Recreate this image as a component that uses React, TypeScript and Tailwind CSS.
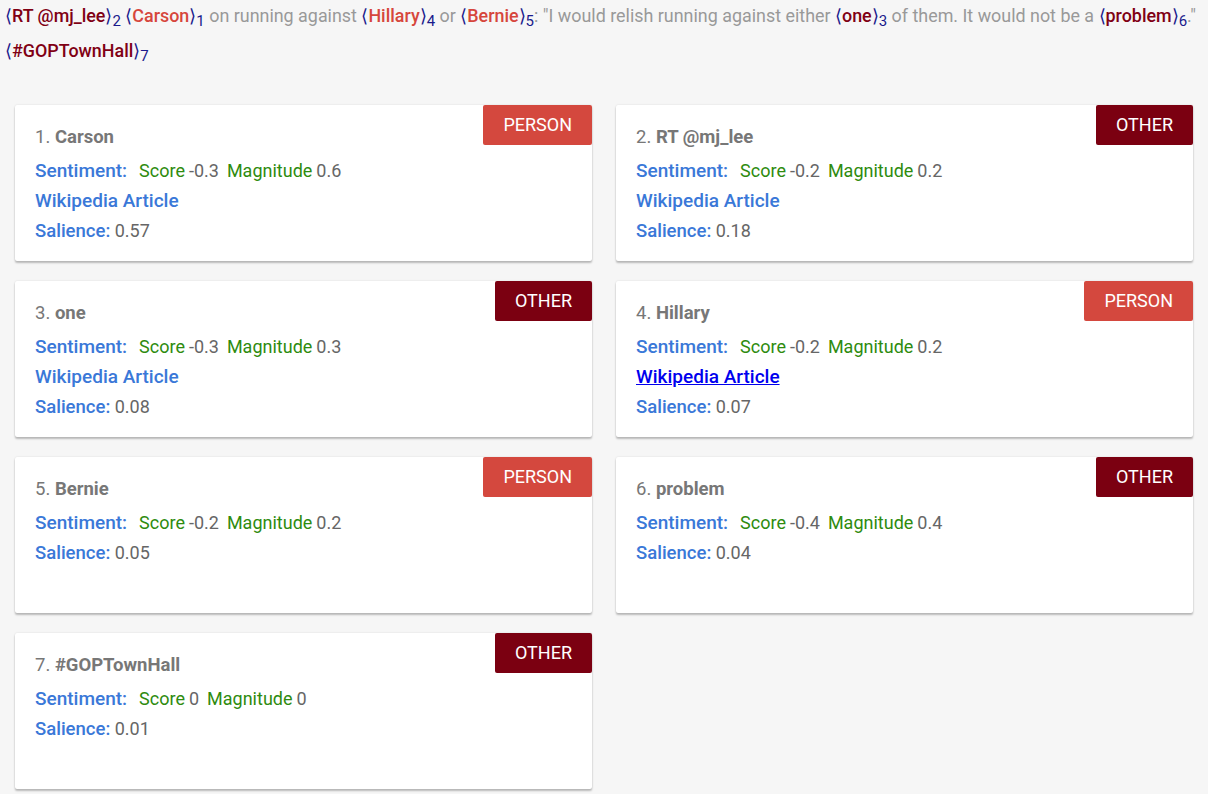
import React from 'react';

type Entity = {
  n: number;
  name: string;
  type: 'PERSON' | 'OTHER';
  score: string;
  magnitude: string;
  wiki: boolean;
  visited?: boolean;
  salience: string;
};

const entities: Entity[] = [
  { n: 1, name: 'Carson', type: 'PERSON', score: '-0.3', magnitude: '0.6', wiki: true, salience: '0.57' },
  { n: 2, name: 'RT @mj_lee', type: 'OTHER', score: '-0.2', magnitude: '0.2', wiki: true, salience: '0.18' },
  { n: 3, name: 'one', type: 'OTHER', score: '-0.3', magnitude: '0.3', wiki: true, salience: '0.08' },
  { n: 4, name: 'Hillary', type: 'PERSON', score: '-0.2', magnitude: '0.2', wiki: true, visited: true, salience: '0.07' },
  { n: 5, name: 'Bernie', type: 'PERSON', score: '-0.2', magnitude: '0.2', wiki: false, salience: '0.05' },
  { n: 6, name: 'problem', type: 'OTHER', score: '-0.4', magnitude: '0.4', wiki: false, salience: '0.04' },
  { n: 7, name: '#GOPTownHall', type: 'OTHER', score: '0', magnitude: '0', wiki: false, salience: '0.01' },
];

const Mention: React.FC<{ text: string; n: number; person?: boolean }> = ({ text, n, person }) => (
  <span className="font-medium">
    <span className="text-[#1a1a8c] font-normal">⟨</span>
    <span className={person ? 'text-[#d6463c]' : 'text-[#800014]'}>{text}</span>
    <span className="text-[#1a1a8c] font-normal">⟩</span>
    <sub className="text-[#1a1a8c] text-[15px] font-normal">{n}</sub>
  </span>
);

const Card: React.FC<{ e: Entity }> = ({ e }) => (
  <div className="relative h-[156px] bg-white rounded-[2px] px-5 pt-[17px] shadow-[0_2px_2px_rgba(0,0,0,0.24),0_0_2px_rgba(0,0,0,0.12)] leading-[30px] text-[18px]">
    <div
      className={
        'absolute top-0 right-0 h-10 flex items-center px-5 rounded-[2px] text-white text-[18px] ' +
        (e.type === 'PERSON' ? 'bg-[#d4483e]' : 'bg-[#7b0011]')
      }
    >
      {e.type}
    </div>
    <div className="text-[#777] text-[18.5px]">
      {e.n}. <span className="font-bold">{e.name}</span>
    </div>
    <div className="mt-1 flex items-baseline">
      <span className="text-[#3a78d8] font-medium text-[19px] mr-3">Sentiment:</span>
      <span className="text-[#2e8b0e]">Score</span>
      <span className="text-[#666] ml-1 mr-2">{e.score}</span>
      <span className="text-[#2e8b0e]">Magnitude</span>
      <span className="text-[#666] ml-1">{e.magnitude}</span>
    </div>
    {e.wiki && (
      <div>
        <a
          href="#"
          className={
            e.visited
              ? 'text-[#0000ee] font-medium text-[19px] underline'
              : 'text-[#3a78d8] font-medium text-[19px]'
          }
        >
          Wikipedia Article
        </a>
      </div>
    )}
    <div>
      <span className="text-[#3a78d8] font-medium text-[18.5px]">Salience:</span>
      <span className="text-[#666]"> {e.salience}</span>
    </div>
  </div>
);

export default function App() {
  return (
    <div className="min-h-screen bg-[#f6f6f6] font-['Roboto',sans-serif] px-[15px] pb-4">
      <p className="text-[17.9px] leading-[35px] text-[#999] -mx-[10px] -mt-[2px]">
        <Mention text="RT @mj_lee" n={2} /> <Mention text="Carson" n={1} person /> on running against{' '}
        <Mention text="Hillary" n={4} person /> or <Mention text="Bernie" n={5} person />: "I would relish running
        against either <Mention text="one" n={3} /> of them. It would not be a <Mention text="problem" n={6} />."{' '}
        <Mention text="#GOPTownHall" n={7} />
      </p>
      <div className="mt-[37px] grid grid-cols-2 gap-x-6 gap-y-5">
        {entities.map((e) => (
          <Card key={e.n} e={e} />
        ))}
      </div>
    </div>
  );
}
